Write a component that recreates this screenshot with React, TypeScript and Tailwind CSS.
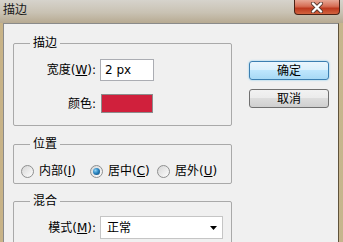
import React from 'react';

function Radio({ checked }: { checked?: boolean }) {
  return (
    <span className="w-[13px] h-[13px] rounded-full border border-[#8e8f8f] bg-[linear-gradient(135deg,#d6d6d6,#fdfdfd)] flex items-center justify-center shrink-0">
      {checked && (
        <span className="w-[7px] h-[7px] rounded-full bg-[radial-gradient(circle_at_35%_35%,#8fd3f5_0%,#2a84c0_45%,#0b3f6a_100%)]" />
      )}
    </span>
  );
}

function Group({ title, className, children }: { title: string; className: string; children?: React.ReactNode }) {
  return (
    <div className={`relative border border-[#a9a9a9] rounded-[2px] ${className}`}>
      <span className="absolute left-[16px] -top-[9px] px-[3px] bg-[#f0f0f0] leading-[16px]">{title}</span>
      {children}
    </div>
  );
}

export default function App() {
  return (
    <div className="w-[343px] h-[242px] overflow-hidden flex flex-col bg-[linear-gradient(90deg,#c8b387_0%,#d9cbaa_50%,#c6b58c_100%)] text-[12px] text-black font-['DejaVu_Sans','Noto_Sans_CJK_SC',sans-serif]">
      {/* title bar */}
      <div className="h-[23px] shrink-0 flex items-start justify-between bg-[linear-gradient(180deg,#d6d3cc_0%,#c9c2b3_55%,#b7aa92_100%)]">
        <span className="pl-[3px] pt-[2px] leading-[16px] text-[#1a1a1a]">描边</span>
        <div className="mr-[3px] w-[46px] h-[15px] rounded-b-[4px] border border-t-0 border-[#4a2216] bg-[linear-gradient(180deg,#e7a795_0%,#d66e55_45%,#bd3a1f_60%,#d2643f_100%)] flex items-center justify-center">
          <svg width="14" height="11" viewBox="0 0 14 11">
            <path d="M3 1.5 L11 9.5 M11 1.5 L3 9.5" stroke="#5a3a30" strokeWidth="4" strokeLinecap="round" />
            <path d="M3 1.5 L11 9.5 M11 1.5 L3 9.5" stroke="#ffffff" strokeWidth="2.4" strokeLinecap="round" />
          </svg>
        </div>
      </div>

      {/* client */}
      <div className="ml-[3px] mr-[4px] flex-1 border border-[#8a8a8a] border-r-[#5f523a] bg-[#f0f0f0] flex pl-[9px] pt-[19px] gap-[17px]">
        <div className="w-[219px] shrink-0 flex flex-col">
          <Group title="描边" className="h-[83px] pt-[15px]">
            <div className="flex items-center">
              <span className="w-[82px] text-right">
                宽度(<span className="underline">W</span>):
              </span>
              <div className="ml-[4px] w-[54px] h-[22px] border border-[#abadb3] bg-white pl-[4px] flex items-center">
                2 px
              </div>
            </div>
            <div className="flex items-center mt-[13px]">
              <span className="w-[82px] text-right">颜色:</span>
              <div className="ml-[5px] w-[52px] h-[19px] border border-[#8c8c8c] bg-[#d0203c]" />
            </div>
          </Group>

          <Group title="位置" className="h-[40px] mt-[18px] pt-[18px] pl-[7px]">
            <div className="flex items-center h-[16px]">
              <div className="w-[69px] flex items-center gap-[5px]">
                <Radio />
                <span>
                  内部(<span className="underline">I</span>)
                </span>
              </div>
              <div className="w-[67px] flex items-center gap-[5px]">
                <Radio checked />
                <span>
                  居中(<span className="underline">C</span>)
                </span>
              </div>
              <div className="flex items-center gap-[5px]">
                <Radio />
                <span>
                  居外(<span className="underline">U</span>)
                </span>
              </div>
            </div>
          </Group>

          <Group title="混合" className="h-[60px] mt-[17px] pt-[14px]">
            <div className="flex items-center">
              <span className="w-[82px] text-right">
                模式(<span className="underline">M</span>):
              </span>
              <div className="ml-[4px] w-[123px] h-[23px] border border-[#c5c5c5] bg-white pl-[6px] pr-[5px] flex items-center justify-between">
                <span>正常</span>
                <svg width="7" height="4" viewBox="0 0 7 4">
                  <polygon points="0,0 7,0 3.5,4" fill="#000" />
                </svg>
              </div>
            </div>
          </Group>
        </div>

        <div className="flex flex-col pt-[18px] gap-[9px]">
          <button className="w-[80px] h-[19px] rounded-[3px] border border-[#3c7fb1] bg-[linear-gradient(180deg,#eaf6fd_0%,#d9f0fc_49%,#bee6fd_50%,#a7d9f5_100%)] shadow-[0_0_2px_#6fc5f0] leading-[16px]">
            确定
          </button>
          <button className="w-[80px] h-[19px] rounded-[3px] border border-[#707070] bg-[linear-gradient(180deg,#f2f2f2_0%,#ebebeb_49%,#dddddd_50%,#cfcfcf_100%)] leading-[16px]">
            取消
          </button>
        </div>
      </div>
    </div>
  );
}
